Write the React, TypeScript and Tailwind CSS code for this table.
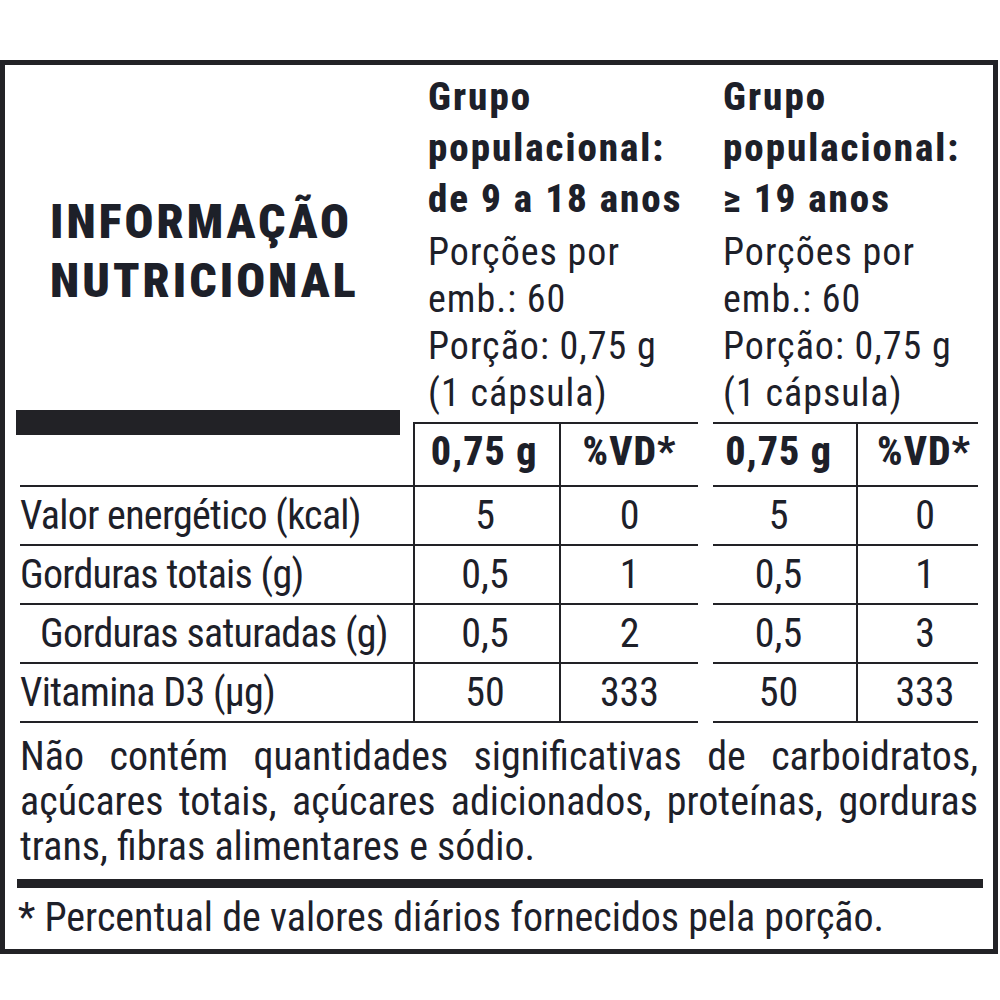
import React from "react";

const font = "font-['Roboto',sans-serif] [font-stretch:75%]";

type Row = { label: string; indent?: boolean; v: [string, string, string, string] };

const rows: Row[] = [
  { label: "Valor energético (kcal)", v: ["5", "0", "5", "0"] },
  { label: "Gorduras totais (g)", v: ["0,5", "1", "0,5", "1"] },
  { label: "Gorduras saturadas (g)", indent: true, v: ["0,5", "2", "0,5", "3"] },
  { label: "Vitamina D3 (µg)", v: ["50", "333", "50", "333"] },
];

const GroupHeader = ({ age, pad }: { age: string; pad: string }) => (
  <div className={`col-span-2 whitespace-nowrap pt-[7px] ${pad}`}>
    <div className="text-[39px] font-extrabold leading-[51px] tracking-[2px]">
      <div>Grupo</div>
      <div>populacional:</div>
      <div>{age}</div>
    </div>
    <div className="mt-[4px] text-[38px] leading-[47px] tracking-[1px]">
      <div>Porções por</div>
      <div>emb.: 60</div>
      <div>Porção: 0,75 g</div>
      <div>(1 cápsula)</div>
    </div>
  </div>
);

const line = "border-[#222226]";
const head = `flex h-[65px] items-center justify-center whitespace-nowrap border-y-2 ${line} pb-[5px] text-[40px] font-extrabold tracking-[1px]`;
const cell = `flex h-[59px] items-center justify-center border-b-2 ${line} text-[40px]`;

export default function App() {
  return (
    <div className={`min-h-screen bg-white pt-[60px] text-[#1d2029] ${font}`}>
      <div className="h-[894px] w-[998px] border-[5px] border-[#222226] pl-[15px]">
        <div className="grid grid-cols-[393px_148px_137px_15px_143px_122px]">
          {/* title and population groups */}
          <div className="h-[357px] pl-[30px] pt-[127px] text-[48px] font-black leading-[59px] tracking-[3px]">
            <div>INFORMAÇÃO</div>
            <div>NUTRICIONAL</div>
          </div>
          <GroupHeader age="de 9 a 18 anos" pad="pl-[15px]" />
          <div />
          <GroupHeader age="≥ 19 anos" pad="pl-[10px]" />

          {/* serving row */}
          <div className={`h-[65px] border-b-2 ${line}`}>
            <div className="-ml-[4px] -mt-[12px] h-[25px] w-[384px] bg-[#222226]" />
          </div>
          <div className={`${head} border-x-2 pr-[6px]`}>0,75 g</div>
          <div className={head}>%VD*</div>
          <div />
          <div className={`${head} pr-[12px]`}>0,75 g</div>
          <div className={`${head} border-l-2 pl-[12px]`}>%VD*</div>

          {/* nutrient rows */}
          {rows.map((r) => (
            <React.Fragment key={r.label}>
              <div
                className={`flex h-[59px] items-center whitespace-nowrap border-b-2 ${line} text-[40px] tracking-[-0.7px] ${r.indent ? "pl-[20px]" : ""}`}
              >
                {r.label}
              </div>
              <div className={`${cell} border-x-2 pr-[4px]`}>{r.v[0]}</div>
              <div className={cell}>{r.v[1]}</div>
              <div />
              <div className={`${cell} pr-[12px]`}>{r.v[2]}</div>
              <div className={`${cell} border-l-2 pl-[14px]`}>{r.v[3]}</div>
            </React.Fragment>
          ))}
        </div>

        {/* notes */}
        <div className="w-[958px] pt-[11px] text-[40px] leading-[45px]">
          <div className="text-justify [text-align-last:justify]">
            Não contém quantidades significativas de carboidratos,
          </div>
          <div className="text-justify [text-align-last:justify]">
            açúcares totais, açúcares adicionados, proteínas, gorduras
          </div>
          <div>trans, fibras alimentares e sódio.</div>
        </div>
        <div className="-ml-[3px] mt-[10px] h-[9px] w-[966px] bg-[#222226]" />
        <div className="-ml-[2px] pt-[7px] text-[40px] leading-[45px]">
          * Percentual de valores diários fornecidos pela porção.
        </div>
      </div>
    </div>
  );
}
